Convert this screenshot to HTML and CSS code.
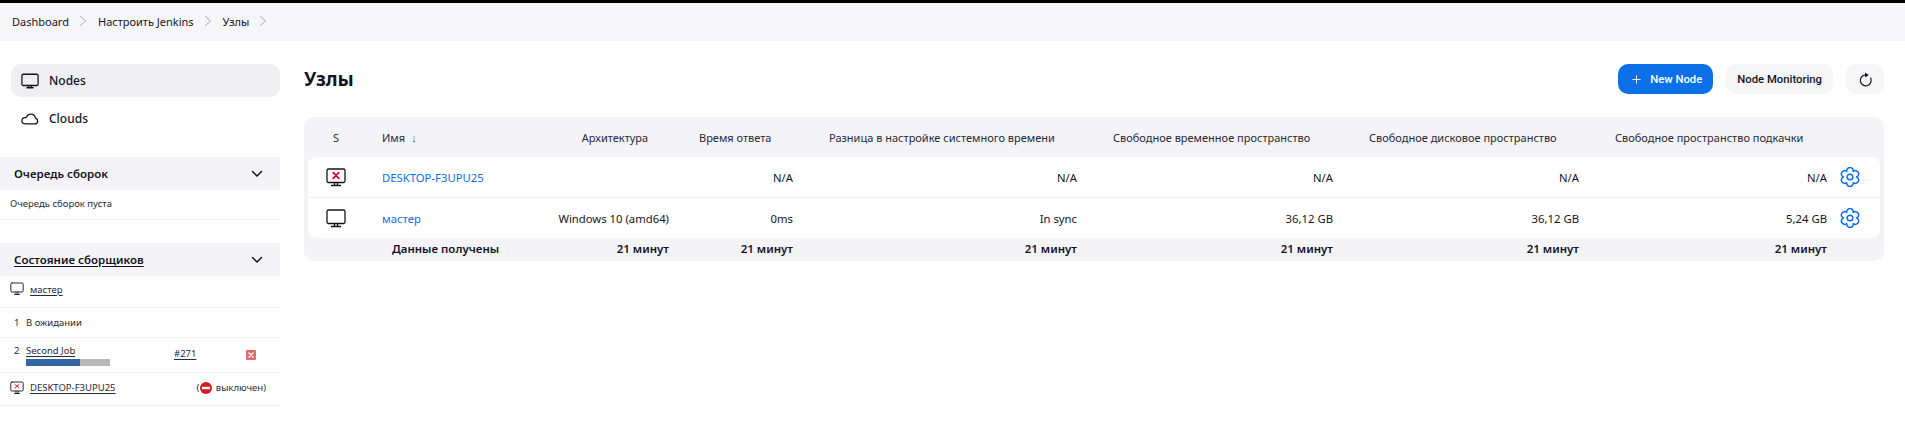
FILE: index.html
```html
<!DOCTYPE html>
<html lang="ru">
<head>
<meta charset="utf-8">
<title>Узлы</title>
<link rel="stylesheet" href="styles.css">
</head>
<body>
<nav class="crumbs">
  <a>Dashboard</a><svg class="sep" viewBox="0 0 8 12"><path d="M1.5 1.5 6.5 6l-5 4.500"/></svg>
  <a>Настроить Jenkins</a><svg class="sep" viewBox="0 0 8 12"><path d="M1.5 1.5 6.500 6l-5 4.500"/></svg>
  <a>Узлы</a><svg class="sep" viewBox="0 0 8 12"><path d="M1.5 1.500 6.500 6l-5 4.500"/></svg>
</nav>
<div class="page">
  <aside class="side">
    <ul class="tasks">
      <li class="task active">
        <svg class="task-icon" viewBox="0 0 20 20"><rect x="1" y="2.500" width="18" height="12.500" rx="1.500"/><path d="M6.500 17.500h7M8.500 15.500v2M11.500 15.500v2"/></svg>
        <span>Nodes</span>
      </li>
      <li class="task">
        <svg class="task-icon" viewBox="0 0 20 20"><path d="M5 15.500h10.500a3.200 3.200 0 0 0 .6-6.300C15.600 6 13.500 4.500 11 4.500 8.500 4.500 6.700 6 6 8.200 3 8.300 1 9.700 1 12c0 2.200 1.800 3.500 4 3.500Z"/></svg>
        <span>Clouds</span>
      </li>
    </ul>
    <section class="pane queue">
      <header class="pane-head"><span>Очередь сборок</span><svg class="chev" viewBox="0 0 12 8"><path d="m1.500 1.500 4.500 4.500 4.500-4.500"/></svg></header>
      <div class="pane-row empty">Очередь сборок пуста</div>
    </section>
    <section class="pane">
      <header class="pane-head"><a class="u">Состояние сборщиков</a><svg class="chev" viewBox="0 0 12 8"><path d="m1.500 1.500 4.500 4.500 4.500-4.500"/></svg></header>
      <div class="pane-row r-master">
        <svg class="mini" viewBox="0 0 14 14"><rect x=".8" y="1" width="12.400" height="9" rx="1.200"/><path d="M4.500 12.500h5M6 10v2.500M8 10v2.500"/></svg>
        <a class="u">мастер</a>
      </div>
      <div class="pane-row r-idle"><span class="num">1</span><span>В ожидании</span></div>
      <div class="pane-row r-job">
        <span class="num top">2</span>
        <div class="job">
          <a class="u">Second Job</a>
          <div class="bar"><div class="bar-fill"></div></div>
        </div>
        <a class="u build">#271</a>
        <svg class="stop" viewBox="0 0 10 10"><rect width="10" height="10" rx="1.200"/><path d="m3 3 4 4m0-4-4 4"/></svg>
      </div>
      <div class="pane-row r-off">
        <svg class="mini" viewBox="0 0 14 14"><rect x=".8" y="1" width="12.400" height="9" rx="1.200"/><path d="M4.500 12.500h5M6 10v2.500M8 10v2.500"/><path class="x" d="m5 3.500 4 3.500m0-3.500-4 3.500"/></svg>
        <a class="u">DESKTOP-F3UPU25</a>
        <span class="off">(<svg class="noentry" viewBox="0 0 12 12"><circle cx="6" cy="6" r="6"/><rect x="2" y="4.800" width="8" height="2.400"/></svg> выключен)</span>
      </div>
    </section>
  </aside>
  <main class="main">
    <div class="title-row">
      <h1>Узлы</h1>
      <div class="actions">
        <a class="btn primary"><svg class="plus" viewBox="0 0 12 12"><path d="M6 1v10M1 6h10"/></svg>New Node</a>
        <a class="btn">Node Monitoring</a>
        <a class="btn icon"><svg viewBox="0 0 16 16"><path d="M13.500 6.500A5.800 5.800 0 1 1 7.500 3.200"/><path class="fill" d="M7.500.4 11.500 3.100 7.500 5.800Z"/></svg></a>
      </div>
    </div>
    <div class="table-wrap">
      <table class="nodes">
        <colgroup>
          <col class="c-s"><col class="c-name"><col class="c-arch"><col class="c-resp"><col class="c-diff"><col class="c-tmp"><col class="c-disk"><col class="c-swap"><col class="c-gear">
        </colgroup>
        <thead>
          <tr>
            <th class="center">S</th>
            <th>Имя<span class="arrow">↓</span></th>
            <th class="center">Архитектура</th>
            <th>Время ответа</th>
            <th>Разница в настройке системного времени</th>
            <th>Свободное временное пространство</th>
            <th>Свободное дисковое пространство</th>
            <th>Свободное пространство подкачки</th>
            <th></th>
          </tr>
        </thead>
        <tbody>
          <tr>
            <td class="center"><svg class="node-icon" viewBox="0 0 20 20"><rect x="1" y="2" width="18" height="13.500" rx="1.500"/><path d="M5.500 18.500h9M8.500 15.500v3M11.500 15.500v3"/><path class="x" d="m7.200 5.700 5.600 5.600m0-5.600-5.600 5.600"/></svg></td>
            <td class="name"><a>DESKTOP-F3UPU25</a></td>
            <td class="num-cell tight"></td>
            <td class="num-cell">N/A</td>
            <td class="num-cell">N/A</td>
            <td class="num-cell">N/A</td>
            <td class="num-cell">N/A</td>
            <td class="num-cell last">N/A</td>
            <td class="gear-cell"><svg class="gear" viewBox="0 0 20 20"><path d="M16.500 10A3.300 3.300 0 1 1 13.250 15.630 3.300 3.300 0 1 1 6.750 15.630 3.300 3.300 0 1 1 3.500 10 3.300 3.300 0 1 1 6.750 4.370 3.300 3.300 0 1 1 13.250 4.370 3.300 3.300 0 1 1 16.500 10Z"/><circle cx="10" cy="10" r="2.800"/></svg></td>
          </tr>
          <tr>
            <td class="center"><svg class="node-icon" viewBox="0 0 20 20"><rect x="1" y="2" width="18" height="13.500" rx="1.500"/><path d="M5.500 18.500h9M8.500 15.500v3M11.500 15.500v3"/></svg></td>
            <td class="name"><a>мастер</a></td>
            <td class="num-cell tight">Windows 10 (amd64)</td>
            <td class="num-cell">0ms</td>
            <td class="num-cell">In sync</td>
            <td class="num-cell">36,12 GB</td>
            <td class="num-cell">36,12 GB</td>
            <td class="num-cell last">5,24 GB</td>
            <td class="gear-cell"><svg class="gear" viewBox="0 0 20 20"><path d="M16.500 10A3.300 3.300 0 1 1 13.250 15.630 3.300 3.300 0 1 1 6.750 15.630 3.300 3.300 0 1 1 3.500 10 3.300 3.300 0 1 1 6.750 4.370 3.300 3.300 0 1 1 13.250 4.370 3.300 3.300 0 1 1 16.500 10Z"/><circle cx="10" cy="10" r="2.800"/></svg></td>
          </tr>
        </tbody>
        <tfoot>
          <tr>
            <td colspan="2" class="foot-label">Данные получены</td>
            <td class="num-cell tight">21 минут</td>
            <td class="num-cell">21 минут</td>
            <td class="num-cell">21 минут</td>
            <td class="num-cell">21 минут</td>
            <td class="num-cell">21 минут</td>
            <td class="num-cell last">21 минут</td>
            <td></td>
          </tr>
        </tfoot>
      </table>
    </div>
  </main>
</div>
</body>
</html>
```
FILE: styles.css
```css
* { box-sizing: border-box; }
html, body { margin: 0; height: 100%; }
body {
  font-family: "Noto Sans", "Open Sans", sans-serif;
  color: #14141f;
  background: #fff;
  border-top: 3px solid #000;
  overflow: hidden;
}
svg { fill: none; stroke: currentColor; stroke-linecap: round; stroke-linejoin: round; flex: none; }

.crumbs {
  display: flex;
  align-items: center;
  height: 38px;
  padding: 0 0 2px 12px;
  background: #f6f6f8;
  font-size: 11px;
}
.crumbs .sep { width: 8px; height: 12px; margin: 0 11px 0 10px; stroke: #a8a8b0; stroke-width: 1; }

.page { display: flex; gap: 24px; }
.side { width: 280px; flex: none; padding-top: 23px; }
.main { flex: 1; padding: 23px 21px 0 0; }

.tasks { list-style: none; margin: 0 0 22px 11px; padding: 0; }
.task {
  display: flex;
  align-items: center;
  gap: 10px;
  height: 33px;
  margin-bottom: 5px;
  padding: 0 10px;
  border-radius: 10px;
  font-size: 12px;
  font-weight: 500;
}
.task.active { background: #eeeef3; }
.task-icon { width: 18px; height: 18px; stroke-width: 1.400; }

.pane-head {
  display: flex;
  align-items: center;
  justify-content: space-between;
  height: 33px;
  padding: 0 17px 0 14px;
  background: #f3f3f8;
  font-size: 11.500px;
  font-weight: 600;
}
.chev { width: 12px; height: 8px; stroke-width: 1.500; }
.u { text-decoration: underline; text-underline-offset: 2px; }
.queue { margin-bottom: 23px; }
.pane-row {
  display: flex;
  align-items: center;
  border-bottom: 1px solid #f0f0f3;
  font-size: 9.500px;
  color: #2a2a35;
}
.empty { height: 30px; padding-left: 10px; padding-bottom: 2px; }
.r-master { height: 32px; padding: 0 0 5px 10px; gap: 6px; }
.r-idle { height: 30px; padding-left: 14px; }
.r-job { height: 35px; padding-left: 14px; align-items: flex-start; padding-top: 6px; }
.r-off { height: 33px; padding: 0 14px 3px 10px; gap: 6px; }
.mini { width: 14px; height: 14px; stroke-width: 1; }
.mini .x { stroke: #e5002b; }
.node-icon .x { stroke: #e5002b; stroke-width: 1.800; }
.num { width: 12px; }
.job { width: 84px; }
.job .u { display: block; line-height: 13px; }
.bar { height: 7px; margin-top: 2px; background: #b8b8b8; }
.bar-fill { width: 54px; height: 100%; background: #3465a4; }
.build { margin: 3px 0 0 64px; }
.stop { width: 10px; height: 10px; margin: 6px 0 0 50px; fill: #e06a6a; stroke: none; }
.stop path { stroke: #fff; stroke-width: 1.400; }
.off { margin-left: auto; display: flex; align-items: center; gap: 1px; white-space: pre; }
.noentry { width: 12px; height: 12px; fill: #d8181c; stroke: none; }
.noentry rect { fill: #fff; }

.title-row { display: flex; align-items: center; justify-content: space-between; height: 30px; margin-bottom: 23px; }
h1 { margin: 0; font-size: 19px; font-weight: 700; }
.actions { display: flex; gap: 13px; }
.btn {
  display: flex;
  align-items: center;
  justify-content: center;
  height: 30px;
  padding: 0 11px;
  border-radius: 10px;
  background: #f6f6f8;
  font-family: Roboto, "Noto Sans", sans-serif;
  font-size: 11.300px;
  font-weight: 500;
}
.btn.primary { background: #0b6fe8; color: #fff; gap: 9px; padding: 0 11px 0 14px; font-weight: 500; }
.plus { width: 9px; height: 9px; stroke-width: 1.200; }
.btn.icon { width: 38px; padding: 0; }
.btn.icon svg { width: 15px; height: 15px; stroke-width: 1.300; }
.btn.icon .fill { fill: currentColor; stroke: none; }

.table-wrap { background: #f3f3f8; border-radius: 10px; padding: 0 4px; }
.nodes { width: 100%; border-collapse: separate; border-spacing: 0; table-layout: fixed; font-size: 11.300px; }
.c-s { width: 56px; }
.c-name { width: 185px; }
.c-arch { width: 132px; }
.c-resp { width: 130px; }
.c-diff { width: 284px; }
.c-tmp { width: 256px; }
.c-disk { width: 246px; }
.c-swap { width: 243px; }
.nodes th {
  height: 40px;
  padding: 0 0 0 18px;
  text-align: left;
  font-size: 11px;
  font-weight: 400;
  white-space: nowrap;
  color: #2a2a35;
}
.nodes th.center, .nodes td.center { text-align: center; padding: 0; }
.arrow { margin-left: 6px; color: #555; }
.nodes tbody td { height: 40px; background: #fff; white-space: nowrap; padding: 0; vertical-align: middle; }
.nodes tbody tr + tr td { height: 41px; border-top: 1px solid #f0f0f3; }
.nodes tbody tr:first-child td:first-child { border-top-left-radius: 8px; }
.nodes tbody tr:first-child td:last-child { border-top-right-radius: 8px; }
.nodes tbody tr:last-child td:first-child { border-bottom-left-radius: 8px; }
.nodes tbody tr:last-child td:last-child { border-bottom-right-radius: 8px; }
.nodes td.name { padding-left: 18px; }
.name a { color: #0b6fe8; }
.nodes td.num-cell { text-align: right; padding-right: 18px; }
.nodes td.tight { padding-right: 12px; }
.nodes td.last { padding-right: 13px; }
.node-icon { width: 20px; height: 20px; stroke-width: 1.300; display: block; margin: 0 auto; }
.gear-cell { text-align: left; }
.gear { width: 20px; height: 20px; stroke: #0b6fe8; stroke-width: 1.500; display: block; }
.nodes tfoot td { height: 23px; font-size: 11.500px; font-weight: 600; padding: 0 0 2px; white-space: nowrap; }
.nodes td.foot-label { padding-left: 84px; }
```
